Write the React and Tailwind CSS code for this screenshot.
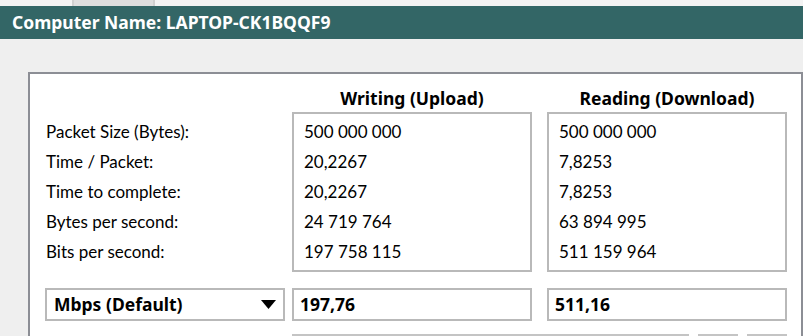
import React from 'react';

const labels = [
  'Packet Size (Bytes):',
  'Time / Packet:',
  'Time to complete:',
  'Bytes per second:',
  'Bits per second:',
];

const writing = ['500 000 000', '20,2267', '20,2267', '24 719 764', '197 758 115'];
const reading = ['500 000 000', '7,8253', '7,8253', '63 894 995', '511 159 964'];

// bold texts use Noto Sans, closer to the original's bold widths
const boldFont = "font-['Noto_Sans',sans-serif] font-bold text-[17.5px]";

const ValueBox = ({ values }) => (
  <div className="w-[240px] h-[160px] border-2 border-[#b9b9b9] bg-white py-[3px] pl-[10px]">
    {values.map((v, i) => (
      <div key={i} className="h-[30px] flex items-center">
        {v}
      </div>
    ))}
  </div>
);

const App = () => {
  return (
    <div
      className="w-[803px] h-[336px] overflow-hidden bg-[#efefef] text-black text-[17px]"
      style={{ fontFamily: 'Lato, "Noto Sans", sans-serif' }}
    >
      {/* tab strip */}
      <div className="h-[6px] bg-[#f3f3f3] flex">
        <div className="ml-[72px] w-[83px] h-[6px] bg-[#dedede] border-x-2 border-[#d0d0d0]"></div>
      </div>

      {/* header */}
      <div className={`h-[33px] bg-[#336666] text-white pl-[12px] flex items-center ${boldFont}`}>
        Computer Name: LAPTOP-CK1BQQF9
      </div>

      <div className="h-[33px]"></div>

      {/* panel */}
      <div className="ml-[28px] w-[775px] h-[300px] border-t-2 border-l-2 border-r-2 border-[#8c8e95] bg-white">
        <div className="flex pt-[11px]">
          <div className="w-[262px] shrink-0"></div>
          <div className={`w-[240px] text-center h-[27px] leading-[27px] ${boldFont}`}>Writing (Upload)</div>
          <div className="w-[15px]"></div>
          <div className={`w-[240px] text-center h-[27px] leading-[27px] ${boldFont}`}>Reading (Download)</div>
        </div>

        <div className="flex">
          <div className="w-[262px] shrink-0 pl-[16px] pt-[5px]">
            {labels.map((l) => (
              <div key={l} className="h-[30px] flex items-center">
                {l}
              </div>
            ))}
          </div>
          <ValueBox values={writing} />
          <div className="w-[15px]"></div>
          <ValueBox values={reading} />
        </div>

        <div className="flex mt-[16px]">
          <div className="w-[262px] shrink-0 pl-[15px]">
            <div className={`w-[240px] h-[33px] border-2 border-[#b9b9b9] bg-white flex items-center justify-between pl-[7px] pr-[7px] ${boldFont}`}>
              <span>Mbps (Default)</span>
              <svg width="15" height="9" viewBox="0 0 15 9">
                <path d="M0 0 H15 L7.5 9 Z" fill="#000" />
              </svg>
            </div>
          </div>
          <div className={`w-[240px] h-[33px] border-2 border-[#b9b9b9] bg-white flex items-center pl-[6px] ${boldFont}`}>
            197,76
          </div>
          <div className="w-[15px]"></div>
          <div className={`w-[240px] h-[33px] border-2 border-[#b9b9b9] bg-white flex items-center pl-[6px] ${boldFont}`}>
            511,16
          </div>
        </div>

        <div className="flex mt-[13px]">
          <div className="w-[262px] shrink-0"></div>
          <div className="w-[397px] h-[30px] border-2 border-[#c4c4c4] bg-white"></div>
          <div className="w-[9px]"></div>
          <div className="w-[40px] h-[30px] border-2 border-[#c4c4c4] bg-white"></div>
          <div className="w-[9px]"></div>
          <div className="w-[40px] h-[30px] border-2 border-[#c4c4c4] bg-white"></div>
        </div>
      </div>
    </div>
  );
};

export default App;
